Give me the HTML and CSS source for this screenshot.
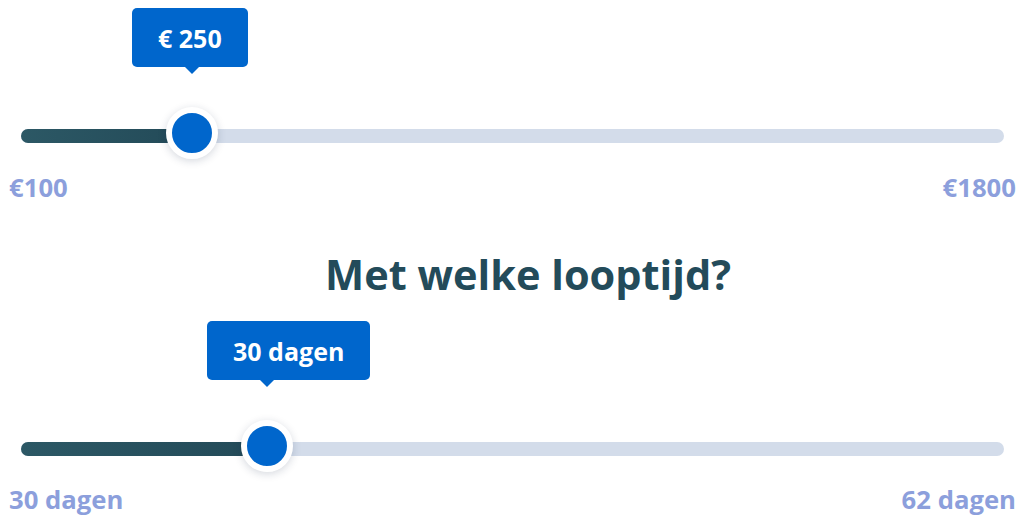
FILE: index.html
```html
<!DOCTYPE html>
<html lang="nl">
<head>
<meta charset="utf-8">
<title>Lening</title>
<link rel="stylesheet" href="styles.css">
</head>
<body>
<div class="page">
  <section class="range range-amount">
    <div class="track">
      <div class="fill" style="--pos:171px"></div>
      <div class="thumb" style="--pos:171px"></div>
      <div class="bubble" style="--pos:171px">€ 250</div>
    </div>
    <div class="labels">
      <span>€100</span>
      <span>€1800</span>
    </div>
  </section>

  <h2 class="heading">Met welke looptijd?</h2>

  <section class="range range-term">
    <div class="track">
      <div class="fill" style="--pos:246px"></div>
      <div class="thumb" style="--pos:246px"></div>
      <div class="bubble" style="--pos:246px">30 dagen</div>
    </div>
    <div class="labels">
      <span>30 dagen</span>
      <span>62 dagen</span>
    </div>
  </section>
</div>
</body>
</html>
```

FILE: styles.css
```css
* { box-sizing: border-box; }

html, body {
  margin: 0;
  padding: 0;
  background: #ffffff;
}

body {
  font-family: "Open Sans", "Noto Sans", "Liberation Sans", sans-serif;
  font-weight: 700;
  width: 1024px;
  height: 524px;
  overflow: hidden;
}

.page {
  display: flex;
  flex-direction: column;
}

.range {
  display: flex;
  flex-direction: column;
}

.track {
  position: relative;
  margin: 0 20px 0 21px;
  height: 14px;
  border-radius: 7px;
  background: #d3dcea;
}

.range-amount .track { margin-top: 129px; }
.range-term .track { margin-top: 143px; }

.fill {
  position: absolute;
  left: 0;
  top: 0;
  height: 14px;
  width: var(--pos);
  border-radius: 7px 0 0 7px;
  background: linear-gradient(90deg, #2c5865 0%, #234a58 100%);
}

.thumb {
  position: absolute;
  left: var(--pos);
  top: -3px;
  width: 52px;
  height: 52px;
  margin-left: -26px;
  margin-top: -19px;
  border-radius: 50%;
  background: #0066cc;
  border: 6px solid #ffffff;
  box-shadow: 0 2px 8px rgba(20, 40, 70, 0.18);
}

.bubble {
  position: absolute;
  left: calc(var(--pos) - 60px);
  bottom: 76px;
  height: 59px;
  padding: 0 26px;
  display: flex;
  align-items: center;
  justify-content: center;
  white-space: nowrap;
  background: #0066cc;
  color: #ffffff;
  font-size: 25px;
  border-radius: 5px;
}

.bubble::after {
  content: "";
  position: absolute;
  left: 60px;
  bottom: -7px;
  margin-left: -7px;
  border-left: 7px solid transparent;
  border-right: 7px solid transparent;
  border-top: 7px solid #0066cc;
}

.labels {
  display: flex;
  justify-content: space-between;
  padding: 0 8px 0 9px;
  margin-top: 28px;
  font-size: 25.7px;
  line-height: 34px;
  color: #8c9fdc;
}

.range-term .labels { margin-top: 27px; }

.heading {
  margin: 44px 0 0 0;
  padding-left: 32px;
  text-align: center;
  font-size: 41.5px;
  line-height: 50px;
  font-weight: 700;
  color: #234b5a;
}
```
